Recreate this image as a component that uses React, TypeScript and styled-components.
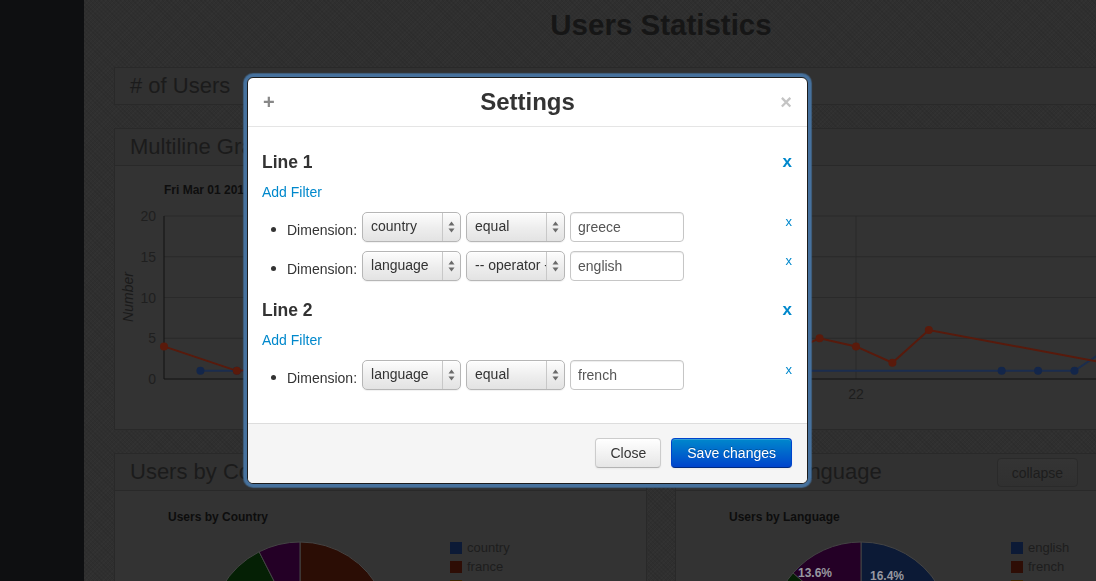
import React from "react";
import styled, { createGlobalStyle } from "styled-components";

const GlobalStyle = createGlobalStyle`
  html, body { margin: 0; padding: 0; }
  body {
    width: 1096px;
    height: 581px;
    overflow: hidden;
    background: #2e2e2e;
    font-family: "Liberation Sans", Arial, Helvetica, sans-serif;
  }
`;

/* ---------- dimmed page behind the dialog ---------- */

const Page = styled.div`
  display: flex;
  width: 1096px;
  height: 581px;
  overflow: hidden;
  background-color: #2f2f2f;
  background-image: repeating-linear-gradient(45deg, rgba(0, 0, 0, 0.07) 0 1px, transparent 1px 3px),
    repeating-linear-gradient(-45deg, rgba(255, 255, 255, 0.015) 0 1px, transparent 1px 3px);
`;

const Sidebar = styled.aside`
  flex: 0 0 84px;
  background: #0e0f11;
`;

const Main = styled.main`
  flex: 0 0 1094px;
  padding-left: 30px;
`;

const PageTitle = styled.h1`
  margin: 0 0 17px;
  height: 50px;
  line-height: 50px;
  text-align: center;
  font-size: 29.5px;
  font-weight: bold;
  color: #161616;
`;

const Panel = styled.section`
  border: 1px solid #292929;
  background: #333333;
  margin-bottom: 23px;
`;

const PanelHeader = styled.header<{ $divided?: boolean }>`
  height: 36px;
  display: flex;
  align-items: center;
  justify-content: space-between;
  padding: 0 15px;
  background: #313131;
  border-bottom: ${(p) => (p.$divided ? "1px solid #292929" : "none")};
  font-size: 22px;
  color: #1b1b1b;
`;

const PanelBody = styled.div<{ $height: number }>`
  height: ${(p) => p.$height}px;
  overflow: hidden;
`;

const CollapseButton = styled.button`
  height: 29px;
  margin: 1px 114px 0 0;
  padding: 0 14px;
  border: 1px solid #2a2a2a;
  border-radius: 4px;
  background: linear-gradient(#343434, #303030);
  font-family: inherit;
  font-size: 14px;
  color: #1d1d1d;
`;

const PanelRow = styled.div`
  display: grid;
  grid-template-columns: 533px 533px;
  column-gap: 28px;
  align-items: start;
`;

const ChartSvg = styled.svg`
  display: block;
`;

/* ---------- modal ---------- */

const Modal = styled.div`
  position: fixed;
  left: 247px;
  top: 77px;
  width: 561px;
  box-sizing: border-box;
  background: #ffffff;
  border: 1px solid #1c1c1c;
  border-radius: 6px;
  box-shadow: 0 0 0 3px #46719d, 0 0 1px 4px rgba(70, 113, 157, 0.75);
  overflow: hidden;
  color: #333333;
  font-size: 14px;
`;

const ModalHeader = styled.div`
  height: 48px;
  display: grid;
  grid-template-columns: 1fr auto 1fr;
  align-items: center;
  padding: 0 15px;
  border-bottom: 1px solid #e5e5e5;
`;

const HeaderIcon = styled.span<{ $align: "start" | "end"; $color: string }>`
  justify-self: ${(p) => p.$align};
  font-size: 20px;
  font-weight: bold;
  line-height: 20px;
  color: ${(p) => p.$color};
`;

const ModalTitle = styled.h3`
  margin: 0;
  font-size: 24px;
  line-height: 30px;
  font-weight: bold;
  color: #333333;
`;

const ModalBody = styled.div`
  padding: 24px 15px 14px 15px;
`;

const Section = styled.div``;

const SectionTitleRow = styled.div`
  display: flex;
  justify-content: space-between;
  align-items: center;
  height: 20px;
  margin-top: 1px;
  margin-bottom: -1px;
`;

const SectionTitle = styled.h4`
  margin: 0 0 0 -1px;
  font-size: 17.5px;
  line-height: 20px;
  font-weight: bold;
  color: #333333;
`;

const RemoveLink = styled.a<{ $big?: boolean }>`
  font-size: ${(p) => (p.$big ? "17px" : "13px")};
  font-weight: ${(p) => (p.$big ? "bold" : "normal")};
  line-height: 20px;
  color: #0088cc;
  text-decoration: none;
  cursor: pointer;
`;

const AddFilter = styled.a`
  display: block;
  margin-top: 11px;
  margin-left: -1px;
  font-size: 14px;
  line-height: 20px;
  color: #0088cc;
  text-decoration: none;
`;

const FilterList = styled.ul`
  list-style: none;
  margin: 10px 0 19px;
  padding: 0;
  display: flex;
  flex-direction: column;
  row-gap: 9px;
`;

const FilterItem = styled.li`
  display: flex;
  align-items: flex-start;
  height: 30px;
`;

const Bullet = styled.span`
  flex: 0 0 5px;
  height: 5px;
  margin: 15px 11px 0 8px;
  border-radius: 50%;
  background: #333333;
`;

const FieldLabel = styled.span`
  padding-top: 8px;
  margin-right: 5px;
  font-size: 14px;
  line-height: 20px;
  color: #333333;
`;

const SelectBox = styled.div`
  display: flex;
  width: 99px;
  height: 30px;
  box-sizing: border-box;
  margin-right: 5px;
  border: 1px solid #b6b6b6;
  border-radius: 5px;
  background: linear-gradient(#fdfdfd, #ededed 55%, #e3e3e3);
  box-shadow: inset 0 1px 0 #ffffff, 0 1px 1px rgba(0, 0, 0, 0.06);
  font-size: 14px;
  color: #333333;
`;

const SelectValue = styled.span`
  flex: 1;
  padding-left: 8px;
  line-height: 27px;
  white-space: nowrap;
  overflow: hidden;
`;

const SelectArrows = styled.span`
  flex: 0 0 17px;
  display: flex;
  align-items: center;
  justify-content: center;
  border-left: 1px solid #c8c8c8;
`;

const TextInput = styled.input`
  width: 114px;
  height: 30px;
  box-sizing: border-box;
  margin: 0;
  padding: 0 7px 1px;
  border: 1px solid #c6c6c6;
  border-radius: 4px;
  box-shadow: inset 0 1px 1px rgba(0, 0, 0, 0.075);
  font-family: inherit;
  font-size: 14px;
  color: #555555;
  background: #ffffff;
  outline: none;
`;

const RowRemove = styled.span`
  margin-left: auto;
`;

const ModalFooter = styled.div`
  display: flex;
  justify-content: flex-end;
  column-gap: 10px;
  padding: 14px 15px 15px;
  background: #f5f5f5;
  border-top: 1px solid #dddddd;
`;

const Button = styled.button<{ $primary?: boolean }>`
  height: 30px;
  padding: 0 ${(p) => (p.$primary ? 15 : 14)}px;
  border-radius: 4px;
  font-family: inherit;
  font-size: 14px;
  line-height: 20px;
  cursor: pointer;
  color: ${(p) => (p.$primary ? "#ffffff" : "#333333")};
  text-shadow: ${(p) => (p.$primary ? "0 -1px 0 rgba(0,0,0,0.25)" : "0 1px 1px rgba(255,255,255,0.75)")};
  background: ${(p) =>
    p.$primary ? "linear-gradient(#0088cc, #0044cc)" : "linear-gradient(#ffffff, #e6e6e6)"};
  border: 1px solid ${(p) => (p.$primary ? "#0044cc" : "#cccccc")};
  border-bottom-color: ${(p) => (p.$primary ? "#002a80" : "#b3b3b3")};
  box-shadow: inset 0 1px 0 rgba(255, 255, 255, 0.2), 0 1px 2px rgba(0, 0, 0, 0.05);
`;

/* ---------- chart drawings ---------- */

const FONT = "Liberation Sans, Arial, sans-serif";
const X0 = 165;
const STEP = 36.42;
const Y0 = 379;
const UNIT = 8.15;
const px = (i: number) => X0 + STEP * i;
const py = (v: number) => Y0 - UNIT * v;

const redSeries: [number, number][] = [
  [0, 4], [2, 1], [6, 2], [9, 3], [12, 1], [15, 2], [17, 3], [18, 5], [19, 4], [20, 2], [21, 6], [27, 1],
];
const blueSeries: [number, number][] = [
  [1, 1], [2, 1], [10, 1], [23, 1], [24, 1], [25, 1], [26, 4],
];

const toPoints = (s: [number, number][]) => s.map(([i, v]) => `${px(i)},${py(v)}`).join(" ");

function LineChart() {
  const grid = [20, 15, 10, 5];
  return (
    <ChartSvg width={1092} height={263} viewBox="116 166 1092 263">
      <text x={165} y={194} fontSize={12} fontWeight="bold" fill="#0e0e0e" fontFamily={FONT}>
        Fri Mar 01 2013 - Thu Mar 28 2013
      </text>
      {grid.map((v) => (
        <line key={v} x1={X0} x2={1208} y1={py(v)} y2={py(v)} stroke="#2a2a2a" strokeWidth={1} />
      ))}
      {[12, 19].map((i) => (
        <line key={i} x1={px(i)} x2={px(i)} y1={py(20)} y2={Y0} stroke="#2a2a2a" strokeWidth={1} />
      ))}
      <line x1={X0} x2={1208} y1={Y0} y2={Y0} stroke="#121212" strokeWidth={1} />
      <line x1={X0} x2={X0} y1={py(20)} y2={Y0} stroke="#121212" strokeWidth={1} />
      {[20, 15, 10, 5, 0].map((v) => (
        <text key={v} x={157} y={py(v) + 5} fontSize={14} textAnchor="end" fill="#1f1f1f" fontFamily={FONT}>
          {v}
        </text>
      ))}
      <text
        x={129}
        y={297}
        fontSize={14}
        fontStyle="italic"
        textAnchor="middle"
        dominantBaseline="central"
        fill="#1a1a1a"
        transform="rotate(-90 129 297)"
        fontFamily={FONT}
      >
        Number
      </text>
      <text x={px(19)} y={399} fontSize={14} textAnchor="middle" fill="#1d1d1d" fontFamily={FONT}>
        22
      </text>
      <polyline points={toPoints(blueSeries)} fill="none" stroke="#1b2d4e" strokeWidth={2} />
      <polyline points={toPoints(redSeries)} fill="none" stroke="#581a0c" strokeWidth={2} />
      {blueSeries.map(([i, v]) => (
        <circle key={`b${i}`} cx={px(i)} cy={py(v)} r={4} fill="#13264a" />
      ))}
      {redSeries.map(([i, v]) => (
        <circle key={`r${i}`} cx={px(i)} cy={py(v)} r={4} fill="#5a1a0b" />
      ))}
    </ChartSvg>
  );
}

type Slice = { from: number; to: number; color: string };
type LegendEntry = { label: string; color: string };

function slicePath(cx: number, cy: number, r: number, a0: number, a1: number) {
  const rad = (a: number) => (a * Math.PI) / 180;
  const p = (a: number) => `${cx + r * Math.sin(rad(a))} ${cy - r * Math.cos(rad(a))}`;
  const large = a1 - a0 > 180 ? 1 : 0;
  return `M ${cx} ${cy} L ${p(a0)} A ${r} ${r} 0 ${large} 1 ${p(a1)} Z`;
}

function PieChart({
  left,
  title,
  slices,
  legend,
  labels,
}: {
  left: number;
  title: string;
  slices: Slice[];
  legend: LegendEntry[];
  labels: { x: number; y: number; text: string }[];
}) {
  const cx = left + 186;
  const cy = 632;
  const legendX = left + 336;
  return (
    <ChartSvg width={531} height={150} viewBox={`${left + 1} 491 531 150`}>
      <text x={left + 54} y={521} fontSize={12} fontWeight="bold" fill="#0d0d0d" fontFamily={FONT}>
        {title}
      </text>
      {slices.map((s) => (
        <path key={s.from} d={slicePath(cx, cy, 90, s.from, s.to)} fill={s.color} stroke="#444444" strokeWidth={1} />
      ))}
      {labels.map((l) => (
        <text key={l.text} x={l.x} y={l.y + 4} fontSize={12} fontWeight="bold" textAnchor="middle" fill="#9898a0" fontFamily={FONT}>
          {l.text}
        </text>
      ))}
      {legend.map((e, k) => (
        <g key={e.label}>
          <rect x={legendX} y={542 + k * 19} width={12} height={12} fill={e.color} />
          <text x={legendX + 17} y={552 + k * 19} fontSize={13} fill="#1d1d1d" fontFamily={FONT}>
            {e.label}
          </text>
        </g>
      ))}
    </ChartSvg>
  );
}

/* ---------- modal content ---------- */

function UpDown() {
  return (
    <svg width="7" height="12" viewBox="0 0 7 12">
      <path d="M3.5 0.5 L6.5 4.5 L0.5 4.5 Z" fill="#6a6a6a" />
      <path d="M3.5 11.5 L6.5 7.5 L0.5 7.5 Z" fill="#6a6a6a" />
    </svg>
  );
}

function Select({ value }: { value: string }) {
  return (
    <SelectBox role="combobox">
      <SelectValue>{value}</SelectValue>
      <SelectArrows>
        <UpDown />
      </SelectArrows>
    </SelectBox>
  );
}

type Filter = { dimension: string; operator: string; value: string };

function LineSection({ title, filters }: { title: string; filters: Filter[] }) {
  return (
    <Section>
      <SectionTitleRow>
        <SectionTitle>{title}</SectionTitle>
        <RemoveLink $big>x</RemoveLink>
      </SectionTitleRow>
      <AddFilter href="#">Add Filter</AddFilter>
      <FilterList>
        {filters.map((f, k) => (
          <FilterItem key={k}>
            <Bullet />
            <FieldLabel>Dimension:</FieldLabel>
            <Select value={f.dimension} />
            <Select value={f.operator} />
            <TextInput defaultValue={f.value} />
            <RowRemove>
              <RemoveLink>x</RemoveLink>
            </RowRemove>
          </FilterItem>
        ))}
      </FilterList>
    </Section>
  );
}

export default function App() {
  return (
    <>
      <GlobalStyle />
      <Page>
        <Sidebar />
        <Main>
          <PageTitle>Users Statistics</PageTitle>
          <Panel>
            <PanelHeader># of Users</PanelHeader>
          </Panel>
          <Panel>
            <PanelHeader $divided>Multiline Graph</PanelHeader>
            <PanelBody $height={263}>
              <LineChart />
            </PanelBody>
          </Panel>
          <PanelRow>
            <Panel>
              <PanelHeader $divided>
                <span>Users by Country</span>
                <CollapseButton>collapse</CollapseButton>
              </PanelHeader>
              <PanelBody $height={150}>
                <PieChart
                  left={114}
                  title="Users by Country"
                  slices={[
                    { from: 0, to: 130, color: "#2b0d05" },
                    { from: 130, to: 200, color: "#3a2600" },
                    { from: 200, to: 300, color: "#0c1a33" },
                    { from: 300, to: 333, color: "#052005" },
                    { from: 333, to: 360, color: "#240026" },
                  ]}
                  legend={[
                    { label: "country", color: "#0c1a36" },
                    { label: "france", color: "#2e0d05" },
                    { label: "greece", color: "#3a2600" },
                  ]}
                  labels={[]}
                />
              </PanelBody>
            </Panel>
            <Panel>
              <PanelHeader $divided>
                <span>Users by Language</span>
                <CollapseButton>collapse</CollapseButton>
              </PanelHeader>
              <PanelBody $height={150}>
                <PieChart
                  left={675}
                  title="Users by Language"
                  slices={[
                    { from: 0, to: 59, color: "#0c1a36" },
                    { from: 59, to: 170, color: "#2b0d05" },
                    { from: 170, to: 230, color: "#3a2600" },
                    { from: 230, to: 311, color: "#052005" },
                    { from: 311, to: 360, color: "#240026" },
                  ]}
                  legend={[
                    { label: "english", color: "#0c1a36" },
                    { label: "french", color: "#2e0d05" },
                    { label: "greek", color: "#3a2600" },
                  ]}
                  labels={[
                    { x: 815, y: 573, text: "13.6%" },
                    { x: 887, y: 576, text: "16.4%" },
                  ]}
                />
              </PanelBody>
            </Panel>
          </PanelRow>
        </Main>
      </Page>

      <Modal role="dialog" aria-label="Settings">
        <ModalHeader>
          <HeaderIcon $align="start" $color="#888888">+</HeaderIcon>
          <ModalTitle>Settings</ModalTitle>
          <HeaderIcon $align="end" $color="#c4c4c4">×</HeaderIcon>
        </ModalHeader>
        <ModalBody>
          <LineSection
            title="Line 1"
            filters={[
              { dimension: "country", operator: "equal", value: "greece" },
              { dimension: "language", operator: "-- operator --", value: "english" },
            ]}
          />
          <LineSection
            title="Line 2"
            filters={[{ dimension: "language", operator: "equal", value: "french" }]}
          />
        </ModalBody>
        <ModalFooter>
          <Button>Close</Button>
          <Button $primary>Save changes</Button>
        </ModalFooter>
      </Modal>
    </>
  );
}
